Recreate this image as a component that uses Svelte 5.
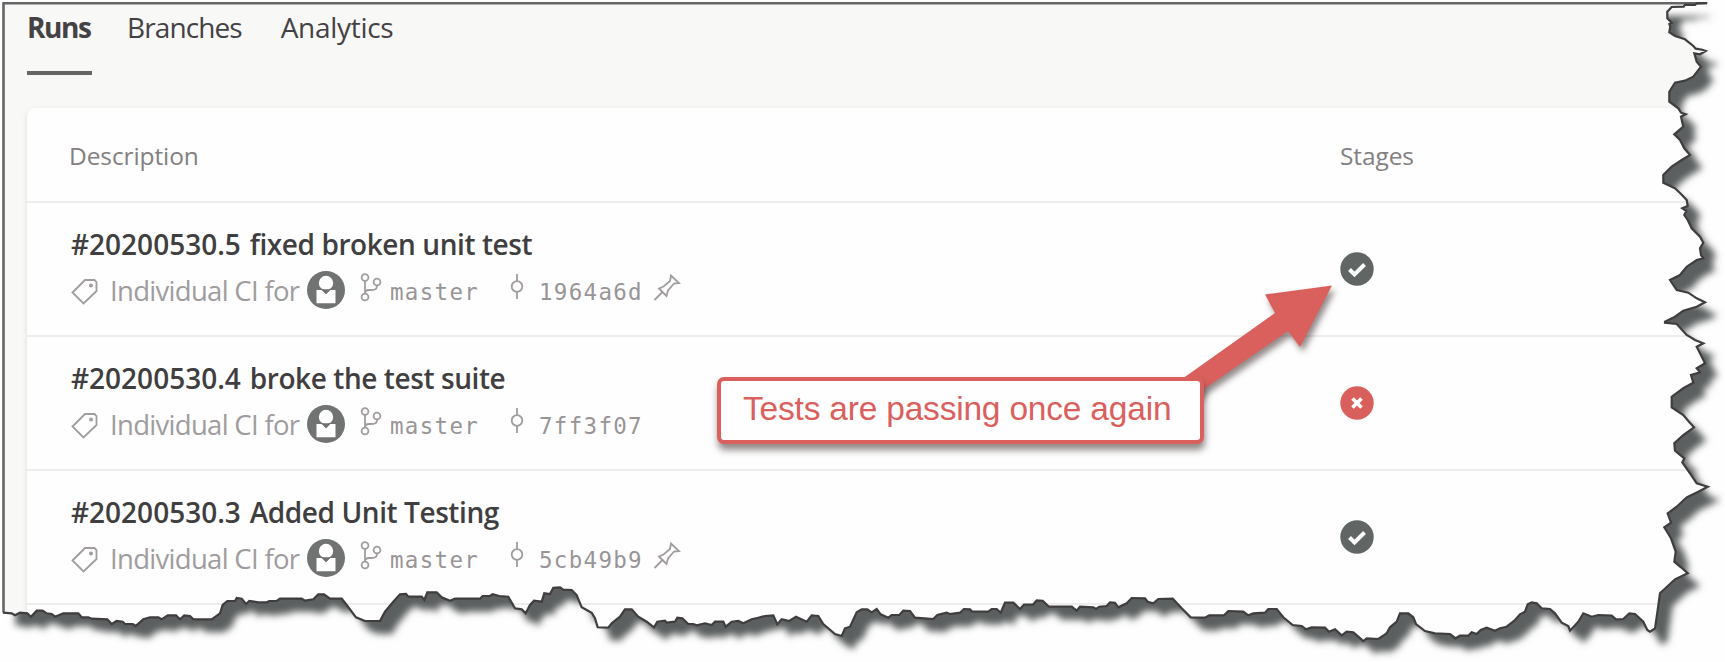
<script>
  const tabs = [
    { label: 'Runs', active: true },
    { label: 'Branches', active: false },
    { label: 'Analytics', active: false, wide: true }
  ];

  const runs = [
    { id: '#20200530.5', text: 'fixed broken unit test', commit: '1964a6d', pinned: true, ok: true },
    { id: '#20200530.4', text: 'broke the test suite', commit: '7ff3f07', pinned: false, ok: false },
    { id: '#20200530.3', text: 'Added Unit Testing', commit: '5cb49b9', pinned: true, ok: true }
  ];

  // Torn paper outline, in thirds of a pixel, each strip from its own origin.
  const right = [
    { x: 1625, y: 0, pts: '247,9 215,10 210,15 180,14 176,20 140,21 127,35 127,55 140,68 133,72 136,80 133,97 150,108 180,118 205,138 212,146 232,149 242,153 225,163 208,160 215,185 228,200 205,230 180,242 150,248 133,275 133,305 160,325 168,338 182,343 168,350 175,380 148,403 165,420 178,445 195,465 170,480 140,500 115,525 115,548 150,565 168,582 185,600 188,618 172,625 184,633 178,645 188,660 200,685 225,710 235,728 225,745 228,765 235,775 215,780 185,800 165,825 135,840 155,870 190,878 215,895 240,907 215,920 175,932 150,950 120,965' },
    { x: 1625, y: 320, pts: '120,8 155,12 185,45 210,60 235,70 215,80 225,100 240,130 215,145 225,157 198,165 205,188 175,205 140,230 140,262 175,285 190,303 207,322 175,345 148,370 150,392 178,415 172,427 195,460 215,490 248,500 220,515 185,532 155,560 128,580 138,608 118,622 138,655 152,695 148,725 168,742 188,760 150,778 105,820 98,870 90,925 75,935' }
  ];
  const bottom = [
    { x: 0, y: 570, pts: '9,128 35,130 45,136 60,128 82,130 93,140 110,122 128,122 140,130 155,132 165,140 190,130 235,130 245,142 265,142 275,146 322,148 335,162 350,153 368,155 375,162 398,162 407,168 430,148 450,142 475,142 485,148 503,136 528,136 540,148 553,136 570,138 580,148 635,148 660,130 668,105 682,93 705,93 710,84 725,86 738,102 748,93 775,97 800,97 808,93 830,93 840,86 905,86 915,92 940,88 955,73 972,73 990,86 1025,86 1040,105 1068,142 1095,153 1140,153 1155,125 1180,95 1200,73 1218,72 1225,80 1265,80 1273,90 1282,67' },
    { x: 430, y: 570, pts: '20,67 35,82 60,92 75,86 150,86 158,78 180,78 188,73 208,78 235,80 255,115 275,118 287,130 300,105 312,92 335,95 343,70 360,72 370,53 390,52 400,59 425,60 440,75 455,112 485,128 495,145 503,172 535,173 545,160 570,140 585,118 605,118 625,140 650,155 672,172 682,155 705,152 710,158 735,155 742,143 757,145 775,162 790,162 800,166 825,160 845,165 855,155 880,155 887,170 905,155 925,153 940,160 965,148 985,143 1005,138 1030,136 1042,163 1055,148 1078,153 1098,140 1130,155 1145,136 1165,138 1180,162 1215,192 1235,198 1245,175 1260,170 1280,127' },
    { x: 860, y: 570, pts: '5,118 22,118 35,127 50,117 62,133 85,143 95,135 118,135 130,122 150,123 165,143 220,147 232,135 260,128 270,132 300,128 312,117 330,118 335,124 385,125 395,117 410,117 422,128 435,98 460,98 480,117 492,104 520,103 530,91 548,92 567,110 635,110 650,122 660,110 700,112 708,117 718,110 740,108 750,97 765,98 775,112 800,100 815,84 855,85 863,95 880,100 895,87 938,86 965,115 992,142 1035,143 1048,136 1092,136 1105,123 1150,125 1165,136 1180,130 1215,128 1225,117 1250,117 1270,142' },
    { x: 1290, y: 570, pts: '8,165 35,168 48,178 65,172 105,173 117,185 135,178 155,196 170,185 190,187 205,200 220,213 230,205 265,207 290,190 300,172 320,155 330,130 355,130 370,142 378,162 405,183 435,190 480,192 497,205 510,197 535,197 545,187 560,192 572,180 590,173 615,182 630,175 650,170 675,150 690,133 705,125 713,103 725,97 740,100 755,115 780,117 795,130 815,158 835,168 840,182 865,155 880,130 905,140 925,135 965,137 978,148 1000,147 1018,130 1035,132 1060,155 1072,180' }
  ];

  const expand = (strips) =>
    strips.flatMap((s) =>
      s.pts.split(' ').map((p) => {
        const [a, b] = p.split(',').map(Number);
        return [+(s.x + a / 3).toFixed(1), +(s.y + b / 3).toFixed(1)];
      })
    );

  const torn = [...expand(right), ...expand(bottom).reverse()];
  const outline = [[3, 3], ...torn];
  const svgPoints = outline.map((p) => p.join(',')).join(' ');
  const tornPoints = torn.map((p) => p.join(',')).join(' ');
  const clip = `polygon(${outline.map((p) => `${p[0]}px ${p[1]}px`).join(',')})`;
</script>

<div class="stage">
  <svg class="layer" viewBox="0 0 1725 662" aria-hidden="true">
    <defs>
      <filter id="soft" x="-5%" y="-5%" width="110%" height="110%">
        <feGaussianBlur stdDeviation="3.8" />
      </filter>
    </defs>
    <polygon points={svgPoints} fill="#5c5f5e" transform="translate(12.5 13)" filter="url(#soft)" />
  </svg>

  <main class="page" style:clip-path={clip}>
    <nav class="tabs">
      {#each tabs as tab}
        <span class="tab" class:active={tab.active} class:wide={tab.wide}>{tab.label}</span>
      {/each}
    </nav>

    <section class="card">
      <div class="row head">
        <span class="th">Description</span>
        <span class="th stages">Stages</span>
      </div>
      {#each runs as run}
        <div class="row run">
          <div class="info">
            <div class="title"><span class="number">{run.id}</span> {run.text}</div>
            <div class="meta">
              <svg class="tag" width="27" height="27" viewBox="0 0 27 27">
                <path d="M1.5 14.5 14 2h9.5l2 2v9L12.5 25.5Z" />
                <circle cx="20" cy="7.5" r="1.1" />
              </svg>
              <span class="ci">Individual CI for</span>
              <svg class="avatar" width="38" height="38" viewBox="0 0 38 38">
                <circle cx="19" cy="19" r="19" fill="#707372" />
                <circle cx="19" cy="12" r="7.2" fill="#fff" />
                <path d="M9.500 19h5.200l4.300 4.300 4.300-4.300h5.200v13.300h-19Z" fill="#fff" />
                <path d="m14.500 18.200 4.500 4.800 4.500-4.800Z" fill="#707372" />
              </svg>
              <svg class="branch" width="22" height="29" viewBox="0 0 22 29">
                <circle cx="5" cy="4.5" r="3.4" />
                <circle cx="5" cy="24" r="3.4" />
                <circle cx="17" cy="9" r="3.4" />
                <path d="M5 8v12.6M17 12.4c0 5-4 4.600-8 4.600-2.500 0-4 1-4 3.600" />
              </svg>
              <span class="mono">master</span>
              <svg class="commit" width="14" height="28" viewBox="0 0 14 28">
                <circle cx="7" cy="13.500" r="5.300" />
                <path d="M7 1v7.200M7 18.800V26" />
              </svg>
              <span class="mono">{run.commit}</span>
              {#if run.pinned}
                <svg class="pin" width="28" height="28" viewBox="0 0 28 28">
                  <path d="M1.500 26 9.500 18M6 14.500 13.500 22l1.500-5.500 6-7 5-.500-8-7.500-1 5.500-6.500 5.500Z" />
                </svg>
              {/if}
            </div>
          </div>
          <svg class="status" width="34" height="34" viewBox="0 0 34 34">
            <circle cx="17" cy="17" r="16.700" fill={run.ok ? '#616564' : '#d95f5d'} />
            {#if run.ok}
              <path d="m9.500 17.500 5 5L24.500 12.500" stroke-width="4" />
            {:else}
              <path d="m12.500 12.500 9 9m0-9-9 9" stroke-width="3.600" />
            {/if}
          </svg>
        </div>
      {/each}
    </section>
  </main>

  <svg class="layer" viewBox="0 0 1725 662" aria-hidden="true">
    <path d="M1707 3.300H3.500V612.500" fill="none" stroke="#666667" stroke-width="2.600" />
    <polyline points={tornPoints} fill="none" stroke="#403d3f" stroke-width="2.200" />
    <polygon
      class="arrow"
      points="1332,285.500 1265,294.500 1275,313 1182,379 1195,400 1204,389 1288,331 1300,347"
    />
  </svg>
  <div class="callout">Tests are passing once again</div>
</div>

<style>
  :global(body) {
    margin: 0;
    background: #fefefe;
  }
  .stage {
    position: relative;
    width: 1725px;
    height: 662px;
    overflow: hidden;
    font-family: 'Open Sans', 'Noto Sans', sans-serif;
  }
  .layer {
    position: absolute;
    inset: 0;
    width: 1725px;
    height: 662px;
    pointer-events: none;
  }
  .page {
    position: relative;
    box-sizing: border-box;
    height: 662px;
    padding-left: 27px;
    background: #f8f8f7;
  }
  .tabs {
    display: flex;
    gap: 35px;
    height: 108px;
  }
  .tab {
    box-sizing: border-box;
    height: 75px;
    padding-top: 8px;
    line-height: 38px;
    font-size: 28px;
    letter-spacing: -0.9px;
    color: #444244;
  }
  .tab.active {
    width: 65px;
    border-bottom: 4px solid #646665;
    font-weight: 700;
    letter-spacing: -1.400px;
  }
  .tab.wide {
    margin-left: 4px;
    letter-spacing: -0.300px;
  }
  .card {
    height: 554px;
    border-radius: 8px 0 0 0;
    background: #fefefe;
    box-shadow: 0 2px 5px #dddbd9;
  }
  .row {
    box-sizing: border-box;
    display: flex;
    border-bottom: 2px solid #ededed;
  }
  .head {
    height: 95px;
    padding: 31px 0 0 42px;
  }
  .th {
    width: 1271px;
    font-size: 24.500px;
    line-height: 34px;
    font-weight: 500;
    letter-spacing: -0.100px;
    color: #828081;
  }
  .stages {
    width: auto;
  }
  .run {
    height: 134px;
    padding: 22px 0 0 44px;
  }
  .info {
    width: 1269px;
  }
  .title {
    height: 38px;
    line-height: 38px;
    font-size: 28px;
    font-weight: 600;
    letter-spacing: -0.420px;
    color: #403e40;
    white-space: nowrap;
  }
  .number {
    margin-right: 2px;
    letter-spacing: 0;
  }
  .meta {
    display: grid;
    grid-template-columns: 39px 197px 53px 30px 120px 29px 114px auto;
    height: 46px;
    margin-top: 7px;
    align-items: start;
    color: #999597;
  }
  .meta svg {
    fill: none;
    stroke: #a19c9e;
    stroke-width: 1.800;
  }
  .meta .avatar {
    margin-top: 1px;
    stroke: none;
  }
  .tag {
    margin-top: 8px;
  }
  .branch {
    margin-top: 3px;
  }
  .commit {
    margin-top: 3px;
  }
  .pin {
    margin-top: 4px;
  }
  .ci {
    line-height: 42px;
    font-size: 27.500px;
    letter-spacing: -0.700px;
    color: #a09c9e;
    white-space: nowrap;
  }
  .mono {
    padding-top: 2px;
    line-height: 40px;
    font-family: 'DejaVu Sans Mono', monospace;
    font-size: 22.500px;
    letter-spacing: 1.300px;
  }
  .status {
    margin-top: 27px;
    fill: none;
    stroke: #fff;
  }
  .status circle {
    stroke: none;
  }
  .arrow {
    fill: #da605d;
    filter: drop-shadow(3px 5px 3px rgb(40 20 20 / 0.5));
  }
  .callout {
    position: absolute;
    left: 717px;
    top: 377px;
    box-sizing: border-box;
    width: 487px;
    height: 67px;
    border: 4px solid #da605d;
    border-radius: 7px;
    padding-left: 22px;
    background: #fefefe;
    box-shadow: 1px 6px 7px rgb(40 20 20 / 0.5);
    color: #da605d;
    font-family: 'Liberation Sans', Arial, sans-serif;
    font-size: 33.500px;
    line-height: 55px;
    letter-spacing: -0.200px;
    white-space: nowrap;
  }
</style>
